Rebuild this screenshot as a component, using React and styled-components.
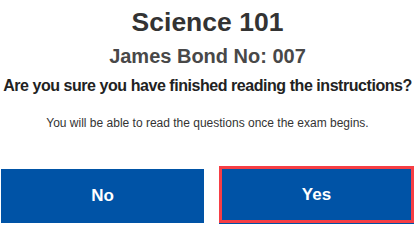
import styled, { createGlobalStyle } from "styled-components";

const GlobalStyle = createGlobalStyle`
  body {
    margin: 0;
    background: #ffffff;
    font-family: "Liberation Sans", Arial, sans-serif;
  }
`;

const Dialog = styled.div`
  width: 416px;
  height: 228px;
  box-sizing: border-box;
  padding: 7px 2px 0 1px;
  display: flex;
  flex-direction: column;
  align-items: center;
`;

const Title = styled.h1`
  margin: 0;
  font-size: 26.5px;
  line-height: 30px;
  font-weight: 700;
  color: #333333;
`;

const Subtitle = styled.h2`
  margin: 7px 0 0;
  font-size: 20px;
  line-height: 24px;
  font-weight: 700;
  color: #484848;
`;

const Question = styled.p`
  margin: 8px 0 0;
  font-size: 16px;
  line-height: 20px;
  font-weight: 700;
  letter-spacing: -0.45px;
  color: #222222;
  white-space: nowrap;
`;

const Note = styled.p`
  margin: 19px 0 0;
  font-size: 12px;
  line-height: 16px;
  color: #333333;
`;

const Actions = styled.div`
  align-self: stretch;
  margin-top: 35px;
  display: grid;
  grid-template-columns: 203fr 195fr;
  column-gap: 15px;
  align-items: start;
`;

const Button = styled.button`
  box-sizing: border-box;
  margin-top: ${(p) => (p.$focused ? "0" : "3px")};
  height: ${(p) => (p.$focused ? "57px" : "54px")};
  border: ${(p) => (p.$focused ? "3px solid #f63e45" : "none")};
  box-shadow: ${(p) => (p.$focused ? "0 1px 0 #0053a6" : "none")};
  background: #0053a6;
  color: #ffffff;
  font-family: "Liberation Sans", Arial, sans-serif;
  font-size: 17px;
  font-weight: 700;
  padding: 0;
  cursor: pointer;
`;

export default function App() {
  return (
    <>
      <GlobalStyle />
      <Dialog>
        <Title>Science 101</Title>
        <Subtitle>James Bond No: 007</Subtitle>
        <Question>Are you sure you have finished reading the instructions?</Question>
        <Note>You will be able to read the questions once the exam begins.</Note>
        <Actions>
          <Button>No</Button>
          <Button $focused>Yes</Button>
        </Actions>
      </Dialog>
    </>
  );
}
